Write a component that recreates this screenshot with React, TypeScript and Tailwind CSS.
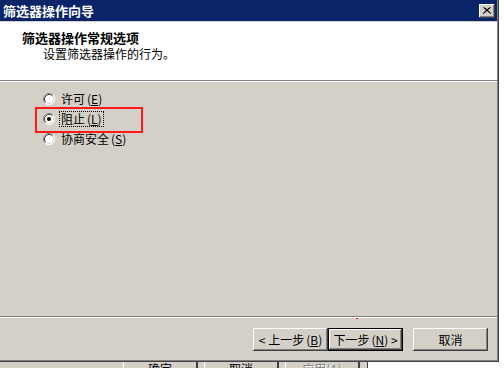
import type { ReactNode } from "react";

const raised =
  "shadow-[inset_-1px_-1px_#404040,inset_1px_1px_#ffffff,inset_-2px_-2px_#808080,inset_2px_2px_#d4d0c8]";

function Radio({ checked = false }: { checked?: boolean }) {
  return (
    <svg width="12" height="12" viewBox="0 0 12 12" className="shrink-0">
      <circle cx="6" cy="6" r="5.5" fill="#ffffff" />
      <path d="M2.11 9.89 A5.5 5.5 0 0 1 9.89 2.11" stroke="#808080" fill="none" />
      <path d="M9.89 2.11 A5.5 5.5 0 0 1 2.11 9.89" stroke="#ffffff" fill="none" />
      <path d="M2.82 9.18 A4.5 4.5 0 0 1 9.18 2.82" stroke="#404040" fill="none" />
      <path d="M9.18 2.82 A4.5 4.5 0 0 1 2.82 9.18" stroke="#d4d0c8" fill="none" />
      {checked && <circle cx="6" cy="6" r="2" fill="#000000" />}
    </svg>
  );
}

function Key({ k }: { k: string }) {
  return (
    <span className="ml-[2px]">
      (<span className="underline underline-offset-1">{k}</span>)
    </span>
  );
}

function Option({
  label,
  k,
  checked,
  focused,
}: {
  label: string;
  k: string;
  checked?: boolean;
  focused?: boolean;
}) {
  return (
    <div className="flex h-[20px] items-center pl-[43px]">
      <Radio checked={checked} />
      <span
        className={
          "ml-[4px] px-[1px] leading-[14px] " +
          (focused ? "border border-dotted border-black" : "border border-transparent")
        }
      >
        {label}
        <Key k={k} />
      </span>
    </div>
  );
}

function WizButton({ children, primary }: { children: ReactNode; primary?: boolean }) {
  return (
    <button
      className={
        "flex h-[23px] w-[75px] items-center justify-center bg-[#d4d0c8] text-[12px] leading-none " +
        (primary ? "border border-black " : "") +
        raised
      }
    >
      {children}
    </button>
  );
}

function Stub({ label, disabled }: { label: ReactNode; disabled?: boolean }) {
  return (
    <div
      className={
        "flex h-full w-[75px] justify-center overflow-hidden border-l border-r-2 border-l-white border-r-[#404040] pt-px leading-[12px] " +
        (disabled ? "text-[#808080]" : "text-black")
      }
    >
      {label}
    </div>
  );
}

export default function App() {
  return (
    <div className="h-[368px] w-[504px] overflow-hidden bg-white font-['Noto_Sans_CJK_SC','SimSun',sans-serif] text-[12px] text-black">
      <div className="h-[362px] w-[499px] border-b border-r border-[#404040]">
        <div className="flex h-full flex-col border-b border-r border-[#808080] bg-[#d4d0c8]">
          {/* Title bar */}
          <div className="flex h-[21px] items-center justify-between bg-[#0a246a] pl-[3px] pr-[2px]">
            <span className="text-[13px] font-bold leading-none text-white">筛选器操作向导</span>
            <button className={"flex h-[14px] w-[16px] items-center justify-center bg-[#d4d0c8] " + raised}>
              <svg width="8" height="7" viewBox="0 0 8 7">
                <path d="M0.5 0.5 L7.5 6.5 M1.5 0.5 L8 6.5 M7.5 0.5 L0.5 6.5 M6.5 0.5 L0 6.5" stroke="#000" strokeWidth="1" />
              </svg>
            </button>
          </div>
          <div className="h-px bg-[#d4d0c8]" />

          {/* Header */}
          <div className="h-[58px] bg-white pt-[8px]">
            <div className="pl-[22px] text-[13px] font-bold leading-[16px]">筛选器操作常规选项</div>
            <div className="pl-[43px] leading-[16px]">设置筛选器操作的行为。</div>
          </div>
          <div className="h-[2px] border-t border-b border-t-[#808080] border-b-white" />

          {/* Body */}
          <div className="relative flex-1 pt-[7px]">
            <Option label="许可" k="E" />
            <Option label="阻止" k="L" checked focused />
            <Option label="协商安全" k="S" />
            <div className="absolute left-[35px] top-[25px] h-[26px] w-[108px] border-2 border-[#ff1a1a]" />
          </div>
          <div className="h-[2px] border-t border-b border-t-[#808080] border-b-white" />

          {/* Footer */}
          <div className="relative flex h-[42px] items-start justify-end pr-[9px] pt-[10px]">
            <span className="absolute left-[356px] top-0 h-px w-[2px] bg-[#ff0000]" />
            <WizButton>
              &lt; 上一步<Key k="B" />
            </WizButton>
            <WizButton primary>
              下一步<Key k="N" />&nbsp;&gt;
            </WizButton>
            <div className="w-[10px]" />
            <WizButton>取消</WizButton>
          </div>
        </div>
      </div>

      {/* Window underneath */}
      <div className="flex h-[6px] w-[504px] overflow-hidden">
        <div className="flex h-full w-[368px] border-r border-[#404040] bg-[#d4d0c8]">
          <div className="w-[123px]" />
          <Stub label="确定" />
          <div className="w-[6px]" />
          <Stub label="取消" />
          <div className="w-[6px]" />
          <Stub
            label={
              <span className="[text-shadow:1px_1px_#ffffff]">
                应用(<span className="underline">A</span>)
              </span>
            }
            disabled
          />
        </div>
      </div>
    </div>
  );
}
